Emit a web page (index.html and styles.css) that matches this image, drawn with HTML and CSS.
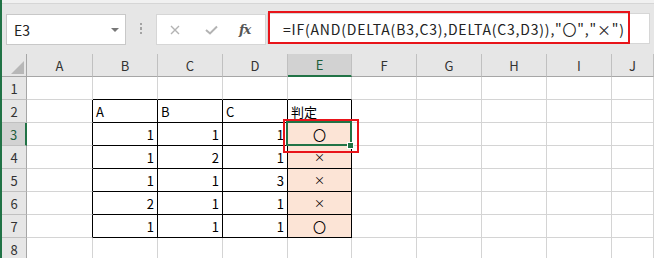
FILE: index.html
```html
<!DOCTYPE html>
<html lang="ja">
<head>
    <meta charset="UTF-8">
    <title>DELTA関数</title>
    <link rel="stylesheet" href="styles.css">
</head>
<body>
    <div class="toolbar">
        <div class="namebox">
            <span>E3</span>
            <span class="caret"></span>
        </div>
        <div class="grip"></div>
        <div class="fbtns">
            <svg class="btn-cancel" width="10" height="10" viewBox="0 0 10 10">
                <path d="M1 1L9 9M9 1L1 9" stroke="#b3b3b3" stroke-width="1.4" fill="none"/>
            </svg>
            <svg class="btn-enter" width="13" height="10" viewBox="0 0 13 10">
                <path d="M1 5L5 8.5L12 1.5" stroke="#b3b3b3" stroke-width="2" fill="none"/>
            </svg>
            <span class="fx">fx</span>
        </div>
        <div class="formula">
            <span class="formula-text">=IF(AND(DELTA(B3,C3),DELTA(C3,D3)),"〇","×")</span>
            <div class="mark"></div>
        </div>
    </div>

    <div class="sheet">
        <!-- column headers -->
        <div class="hd corner"><span class="tri"></span></div>
        <div class="hd col">A</div>
        <div class="hd col">B</div>
        <div class="hd col">C</div>
        <div class="hd col">D</div>
        <div class="hd col on">E</div>
        <div class="hd col">F</div>
        <div class="hd col">G</div>
        <div class="hd col">H</div>
        <div class="hd col">I</div>
        <div class="hd col">J</div>

        <!-- row 1 -->
        <div class="hd row">1</div>
        <div class="c"></div>
        <div class="c bb"></div><div class="c bb"></div><div class="c bb"></div><div class="c bb"></div>
        <div class="c"></div><div class="c"></div><div class="c"></div><div class="c"></div><div class="c"></div>

        <!-- row 2 -->
        <div class="hd row">2</div>
        <div class="c br"></div>
        <div class="c t">A</div><div class="c t">B</div><div class="c t">C</div><div class="c t">判定</div>
        <div class="c"></div><div class="c"></div><div class="c"></div><div class="c"></div><div class="c"></div>

        <!-- row 3 -->
        <div class="hd row on">3</div>
        <div class="c br"></div>
        <div class="c t n">1</div><div class="c t n">1</div><div class="c t n">1</div>
        <div class="c t res active">〇
            <div class="sel"><span class="handle"></span></div>
            <div class="mark cell-mark"></div>
        </div>
        <div class="c"></div><div class="c"></div><div class="c"></div><div class="c"></div><div class="c"></div>

        <!-- row 4 -->
        <div class="hd row">4</div>
        <div class="c br"></div>
        <div class="c t n">1</div><div class="c t n">2</div><div class="c t n">1</div>
        <div class="c t res x">×</div>
        <div class="c"></div><div class="c"></div><div class="c"></div><div class="c"></div><div class="c"></div>

        <!-- row 5 -->
        <div class="hd row">5</div>
        <div class="c br"></div>
        <div class="c t n">1</div><div class="c t n">1</div><div class="c t n">3</div>
        <div class="c t res x">×</div>
        <div class="c"></div><div class="c"></div><div class="c"></div><div class="c"></div><div class="c"></div>

        <!-- row 6 -->
        <div class="hd row">6</div>
        <div class="c br"></div>
        <div class="c t n">2</div><div class="c t n">1</div><div class="c t n">1</div>
        <div class="c t res x">×</div>
        <div class="c"></div><div class="c"></div><div class="c"></div><div class="c"></div><div class="c"></div>

        <!-- row 7 -->
        <div class="hd row">7</div>
        <div class="c br"></div>
        <div class="c t n">1</div><div class="c t n">1</div><div class="c t n">1</div>
        <div class="c t res">〇</div>
        <div class="c"></div><div class="c"></div><div class="c"></div><div class="c"></div><div class="c"></div>

        <!-- row 8 -->
        <div class="hd row">8</div>
        <div class="c"></div><div class="c"></div><div class="c"></div><div class="c"></div><div class="c"></div>
        <div class="c"></div><div class="c"></div><div class="c"></div><div class="c"></div><div class="c"></div>
    </div>
</body>
</html>
```

FILE: styles.css
```css
* {
    box-sizing: border-box;
}
body {
    margin: 0;
    width: 654px;
    height: 258px;
    overflow: hidden;
    background: #fff;
    border-left: 2px solid #217346;
    font-family: "Noto Sans CJK JP", "Noto Sans", sans-serif;
    color: #000;
}

/* formula bar */
.toolbar {
    height: 54px;
    background: #e6e6e6;
    border-top: 3px solid #f1f1f1;
    box-shadow: inset 0 1px #d6d6d6;
    display: flex;
    align-items: flex-start;
    padding-top: 11px;
    padding-left: 4px;
}
.namebox {
    width: 120px;
    height: 31px;
    background: #fff;
    border: 1px solid #c8c8c8;
    display: flex;
    align-items: center;
    justify-content: space-between;
    padding: 0 6px 0 7px;
    font-size: 14px;
    color: #222;
}
.caret {
    width: 0;
    height: 0;
    border-left: 4px solid transparent;
    border-right: 4px solid transparent;
    border-top: 4px solid #777;
}
.grip {
    width: 2px;
    height: 11px;
    margin: 9px 14px 0 14px;
    background: repeating-linear-gradient(#a3a3a3 0 2px, transparent 2px 4.5px);
}
.fbtns {
    width: 110px;
    height: 31px;
    background: #fff;
    border: 1px solid #d6d6d6;
    display: flex;
    align-items: center;
    padding-left: 13px;
}
.btn-enter {
    margin-left: 25px;
}
.fx {
    margin-left: 21px;
    font-family: "DejaVu Serif", "Liberation Serif", serif;
    font-style: italic;
    font-weight: bold;
    font-size: 13px;
    color: #555;
    letter-spacing: -1px;
}
.formula {
    position: relative;
    width: 383px;
    height: 31px;
    margin-left: 1px;
    margin-top: -1px;
    background: #fff;
    border: 1px solid #d6d6d6;
    display: flex;
    align-items: center;
    padding-left: 15px;
    font-size: 14px;
    letter-spacing: 0.8px;
    color: #222;
    white-space: nowrap;
}
.mark {
    position: absolute;
    left: 0;
    top: -3px;
    width: 362px;
    height: 33px;
    border: 2px solid #e8141a;
}

/* sheet grid */
.sheet {
    display: grid;
    grid-template-columns: 25px 66px 65px 65px 65px 64px 65px 65px 65px 65px 42px;
    grid-auto-rows: 23px;
    font-size: 13px;
}
.c {
    border-right: 1px solid #d4d4d4;
    border-bottom: 1px solid #d4d4d4;
}
.hd {
    background: #e6e6e6;
    color: #333;
    border-right: 1px solid #c0c0c0;
    border-bottom: 1px solid #c0c0c0;
    display: flex;
    align-items: center;
    justify-content: center;
}
.hd.col {
    border-bottom-color: #a6a6a6;
}
.hd.row {
    border-right-color: #a6a6a6;
}
.hd.col.on {
    background: #d2d2d2;
    border-bottom: 2px solid #217346;
    color: #1d5e3a;
}
.hd.row.on {
    background: #d2d2d2;
    border-right: 2px solid #217346;
    color: #1d5e3a;
}
.corner {
    border-bottom-color: #a6a6a6;
    border-right-color: #a6a6a6;
    align-items: flex-end;
    justify-content: flex-end;
    padding: 0 2px 2px 0;
}
.tri {
    width: 13px;
    height: 13px;
    background: #b7b7b7;
    clip-path: polygon(100% 0, 100% 100%, 0 100%);
}

/* table cells */
.br {
    border-right-color: #000;
}
.bb {
    border-bottom-color: #000;
}
.t {
    border-right-color: #000;
    border-bottom-color: #000;
    display: flex;
    align-items: center;
    padding: 0 3px;
}
.n {
    justify-content: flex-end;
}
.res {
    background: #fce4d6;
    justify-content: center;
}
.res.x {
    font-size: 11px;
}
.active {
    position: relative;
}
.sel {
    position: absolute;
    left: -2px;
    top: -2px;
    right: -1px;
    bottom: -1px;
    border: 2px solid #217346;
}
.handle {
    position: absolute;
    right: -4px;
    bottom: -5px;
    width: 7px;
    height: 7px;
    background: #217346;
    border: 1px solid #fff;
}
.cell-mark {
    left: -5px;
    top: -4px;
    width: 76px;
    height: 34px;
}
```
